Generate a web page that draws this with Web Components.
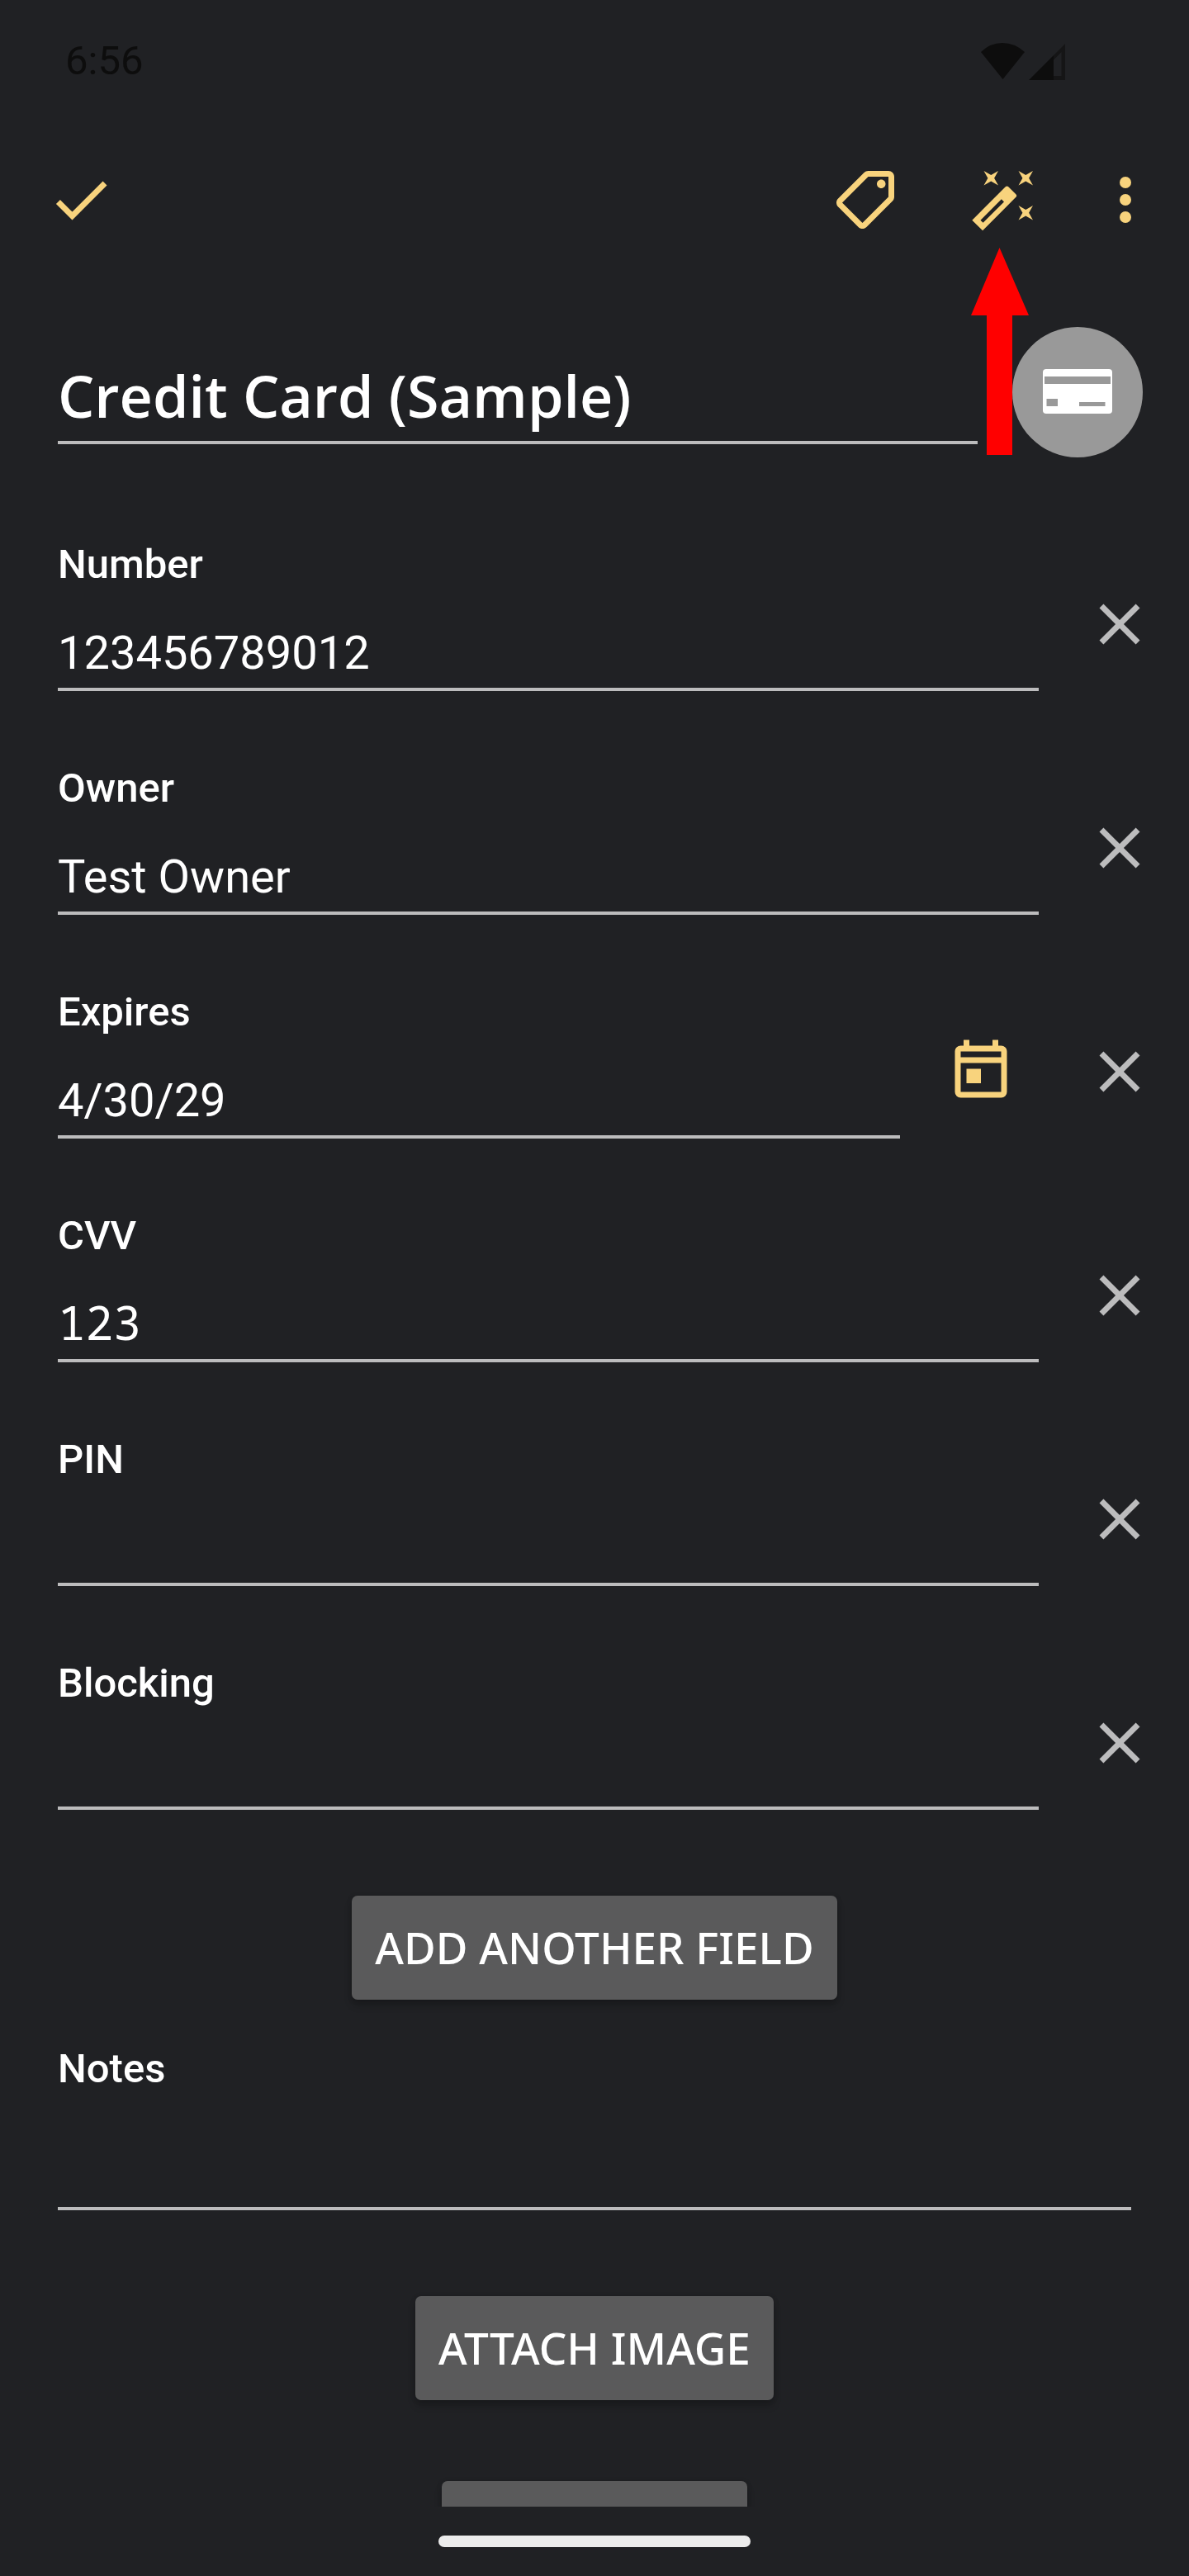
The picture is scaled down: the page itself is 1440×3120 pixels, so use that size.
<!DOCTYPE html>
<html lang="en">
<head>
<meta charset="utf-8">
<meta name="viewport" content="width=device-width, initial-scale=1">
<title>Edit card</title>
<style>
  html, body { margin: 0; height: 100%; background: #202124; }
  body { font-family: Roboto, "Noto Sans", sans-serif; color: #fff; }
</style>
</head>
<body>
<card-editor></card-editor>
<script>
const ICONS = {
  check: '<path d="M9 16.17 4.83 12l-1.42 1.41L9 19 21 7l-1.41-1.41z"/>',
  tag: '<path fill-rule="evenodd" transform="translate(24 0) scale(-1 1)" d="M21.41 11.58L12.41 2.58C12.04 2.21 11.53 2 11 2H4C2.9 2 2 2.9 2 4V11C2 11.53 2.21 12.04 2.59 12.41L11.58 21.41C11.95 21.78 12.46 22 13 22S14.04 21.79 14.41 21.41L21.41 14.41C21.79 14.04 22 13.53 22 13S21.79 11.96 21.41 11.58ZM13 20L4 11V4H11L20 13ZM6.5 5C7.33 5 8 5.67 8 6.5S7.33 8 6.5 8 5 7.33 5 6.5 5.67 5 6.5 5Z"/>',
  wand: '<path fill-rule="evenodd" d="M7.5 5.6L5 7L6.4 4.5L5 2L7.5 3.4L10 2L8.6 4.5L10 7ZM19.5 15.4L22 14L20.6 16.5L22 19L19.5 17.6L17 19L18.4 16.5L17 14ZM22 2L20.6 4.5L22 7L19.5 5.6L17 7L18.4 4.5L17 2L19.5 3.4ZM12.5 7.5Q13 7 13.5 7.5L16.1 10.1Q16.6 10.6 16.1 11.1L4.6 22.65L.95 19.05ZM11.1 11.8L3.85 19.05L4.75 19.9L12 12.7Z"/>',
  more: '<circle cx="12" cy="6" r="2"/><circle cx="12" cy="12" r="2"/><circle cx="12" cy="18" r="2"/>',
  close: '<path d="M19 6.41 17.59 5 12 10.59 6.41 5 5 6.41 10.59 12 5 17.59 6.41 19 12 13.41 17.59 19 19 17.59 13.41 12z"/>',
  calendar: '<path fill-rule="evenodd" d="M19 3h-1V1h-2v2H8V1H6v2H5a2 2 0 0 0-2 2v14a2 2 0 0 0 2 2h14a2 2 0 0 0 2-2V5a2 2 0 0 0-2-2zM5 5h14v2H5zM5 9h14v10H5zM7 11v5h5v-5z"/>'
};

function define(name, html, setup) {
  const template = document.createElement('template');
  template.innerHTML = '<style>*{box-sizing:border-box}</style>' + html;
  customElements.define(name, class extends HTMLElement {
    constructor() {
      super();
      this.attachShadow({ mode: 'open' }).append(template.content.cloneNode(true));
    }
    connectedCallback() { if (setup) setup(this, this.shadowRoot); }
  });
}

define('icon-button', `
  <style>
    :host { display: block; flex: none; color: #f8d37d; }
    :host([muted]) { color: #bcbcbd; }
    button { display: block; width: 84px; height: 84px; padding: 0; border: 0; background: none; color: inherit; cursor: pointer; }
    svg { display: block; width: 84px; height: 84px; fill: currentColor; }
  </style>
  <button type="button"><svg viewBox="0 0 24 24" aria-hidden="true"></svg></button>`,
  (host, root) => {
    root.querySelector('svg').innerHTML = ICONS[host.getAttribute('icon')];
    root.querySelector('button').setAttribute('aria-label', host.getAttribute('label'));
  });

define('status-bar', `
  <style>
    :host { display: flex; justify-content: space-between; align-items: center; padding: 42px 150px 38px 79px; color: #0d0d0d; font-size: 49px; line-height: 64px; }
    svg { display: block; width: 102px; height: 46px; }
  </style>
  <time>6:56</time>
  <svg viewBox="0 0 102 46" aria-hidden="true">
    <path fill="#0d0d0d" d="M0 12Q11 1 26 1T53 12L26.500 45Z"/>
    <path fill="#0d0d0d" d="M58 46L88 16V46Z"/>
    <path fill="#151516" fill-rule="evenodd" d="M88 16L102 2V46H88V41H97.500V12L88 21.500Z"/>
  </svg>`);

define('tool-bar', `
  <style>
    :host { display: flex; align-items: center; justify-content: space-between; padding: 56px 35px 56px 56px; }
    div { display: flex; gap: 84px; }
    icon-button:last-child { margin-left: -21px; }
  </style>
  <icon-button icon="check" label="Save"></icon-button>
  <div>
    <icon-button icon="tag" label="Labels"></icon-button>
    <icon-button icon="wand" label="Customize"></icon-button>
    <icon-button icon="more" label="More options"></icon-button>
  </div>`);

define('card-title', `
  <style>
    :host { display: flex; align-items: flex-end; gap: 42px; padding: 56px 56px 0 70px; }
    input { flex: 1; min-width: 0; height: 107px; margin: 0 0 16px; padding: 0 0 7px; border: 0; border-bottom: 4px solid #bcbcbd; border-radius: 0; outline: 0; background: none; color: #fff; font: 600 70px/96px "Open Sans", "Noto Sans", sans-serif; }
    button { flex: none; width: 158px; height: 158px; padding: 0; border: 0; border-radius: 50%; background: #999; }
    svg { display: block; width: 158px; height: 158px; }
  </style>
  <input type="text" aria-label="Title" value="Credit Card (Sample)">
  <button type="button" aria-label="Card icon">
    <svg viewBox="0 0 158 158" aria-hidden="true">
      <rect x="37" y="51" width="84" height="54" rx="4" fill="#fff"/>
      <path fill="#999" d="M39 60h80v9H39zM41.500 87h13.500v9H41.500zM81 91h31.500v5H81z"/>
    </svg>
  </button>`);

define('card-field', `
  <style>
    :host { display: flex; align-items: flex-end; gap: 56px; padding: 0 42px 0 70px; }
    div { flex: 1; min-width: 0; }
    label { display: block; font-weight: 500; font-size: 49px; line-height: 64px; }
    input { display: block; width: 100%; height: 121px; margin: 0; padding: 43px 0 10px; border: 0; border-bottom: 4px solid #bcbcbd; border-radius: 0; outline: 0; background: none; color: #fff; font: 400 56px/64px Roboto, sans-serif; }
    :host([plain]) input { padding: 40px 0 13px; font-family: "Noto Sans Mono", "Noto Sans", sans-serif; }
    icon-button, ::slotted(icon-button) { margin-bottom: 39px; }
    ::slotted(icon-button) { margin-right: 28px; }
  </style>
  <div><label for="value"></label><input id="value" type="text"></div>
  <slot></slot>
  <icon-button muted icon="close" label="Remove field"></icon-button>`,
  (host, root) => {
    root.querySelector('label').textContent = host.getAttribute('name');
    root.querySelector('input').value = host.getAttribute('value') || '';
  });

define('card-notes', `
  <style>
    :host { display: block; padding: 0 70px; }
    label { display: block; font-weight: 500; font-size: 49px; line-height: 64px; }
    textarea { display: block; width: 100%; height: 139px; margin: 0; padding: 61px 0 10px; border: 0; border-bottom: 4px solid #bcbcbd; outline: 0; resize: none; overflow: hidden; background: none; color: #fff; font: 400 56px/64px Roboto, sans-serif; }
  </style>
  <label for="notes">Notes</label><textarea id="notes" rows="1"></textarea>`);

define('raised-button', `
  <style>
    :host { display: block; }
    button { display: block; height: 126px; min-width: 370px; padding: 0 28px; border: 0; border-radius: 7px; background: #5a5a5b; box-shadow: 0 7px 10px rgba(0,0,0,.2), 0 1px 7px rgba(0,0,0,.12); color: #fff; font: 500 53px/72px "Noto Sans", sans-serif; white-space: nowrap; }
  </style>
  <button type="button"><slot></slot></button>`,
  (host, root) => {
    if (host.hasAttribute('label')) root.querySelector('button').setAttribute('aria-label', host.getAttribute('label'));
  });

define('home-indicator', `
  <style>
    :host { display: flex; justify-content: center; padding: 35px 0; }
    span { width: 378px; height: 14px; border-radius: 7px; background: #ececec; }
  </style><span></span>`);

define('card-editor', `
  <style>
    :host { display: flex; flex-direction: column; height: 100vh; position: relative; background: #202124; }
    main { flex: 1; min-height: 0; overflow: hidden; display: flex; flex-direction: column; }
    main > * { flex: none; }
    section { display: flex; flex-direction: column; gap: 86px; padding: 98px 0 104px; }
    raised-button { align-self: center; }
    card-notes { padding-top: 52px; padding-bottom: 104px; }
    raised-button + raised-button { margin-top: 98px; }
    .pointer { position: absolute; right: 194px; top: 300px; width: 70px; height: 251px; fill: #f00; }
  </style>
  <status-bar></status-bar>
  <tool-bar></tool-bar>
  <main>
    <card-title></card-title>
    <section>
      <card-field name="Number" value="123456789012"></card-field>
      <card-field name="Owner" value="Test Owner"></card-field>
      <card-field name="Expires" value="4/30/29"><icon-button icon="calendar" label="Pick a date"></icon-button></card-field>
      <card-field name="CVV" value="123" plain></card-field>
      <card-field name="PIN"></card-field>
      <card-field name="Blocking"></card-field>
    </section>
    <raised-button>ADD ANOTHER FIELD</raised-button>
    <card-notes></card-notes>
    <raised-button>ATTACH IMAGE</raised-button>
    <raised-button label="Attach file"></raised-button>
  </main>
  <home-indicator></home-indicator>
  <svg class="pointer" viewBox="0 0 70 251" aria-hidden="true"><path d="M34.500 0L70 82H50V251H19V82H0Z"/></svg>`);
</script>
</body>
</html>
